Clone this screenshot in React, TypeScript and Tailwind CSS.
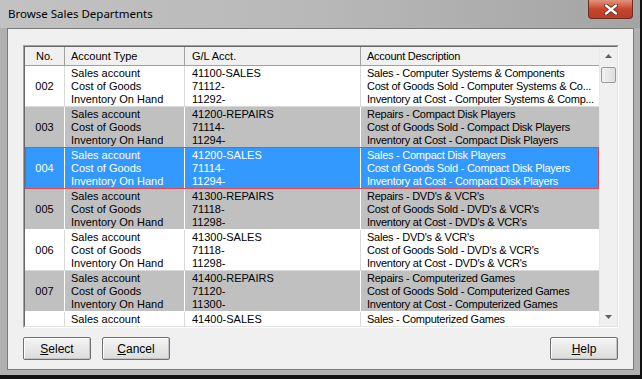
import React from "react";

type Row = {
  no: string;
  types: string[];
  accts: string[];
  descs: string[];
  shade: "white" | "gray" | "selected";
};

const rows: Row[] = [
  {
    no: "002",
    types: ["Sales account", "Cost of Goods", "Inventory On Hand"],
    accts: ["41100-SALES", "71112-", "11292-"],
    descs: [
      "Sales - Computer Systems & Components",
      "Cost of Goods Sold - Computer Systems & Co...",
      "Inventory at Cost - Computer Systems & Comp...",
    ],
    shade: "white",
  },
  {
    no: "003",
    types: ["Sales account", "Cost of Goods", "Inventory On Hand"],
    accts: ["41200-REPAIRS", "71114-", "11294-"],
    descs: [
      "Repairs - Compact Disk Players",
      "Cost of Goods Sold - Compact Disk Players",
      "Inventory at Cost - Compact Disk Players",
    ],
    shade: "gray",
  },
  {
    no: "004",
    types: ["Sales account", "Cost of Goods", "Inventory On Hand"],
    accts: ["41200-SALES", "71114-", "11294-"],
    descs: [
      "Sales - Compact Disk Players",
      "Cost of Goods Sold - Compact Disk Players",
      "Inventory at Cost - Compact Disk Players",
    ],
    shade: "selected",
  },
  {
    no: "005",
    types: ["Sales account", "Cost of Goods", "Inventory On Hand"],
    accts: ["41300-REPAIRS", "71118-", "11298-"],
    descs: [
      "Repairs - DVD's & VCR's",
      "Cost of Goods Sold - DVD's & VCR's",
      "Inventory at Cost - DVD's & VCR's",
    ],
    shade: "gray",
  },
  {
    no: "006",
    types: ["Sales account", "Cost of Goods", "Inventory On Hand"],
    accts: ["41300-SALES", "71118-", "11298-"],
    descs: [
      "Sales - DVD's & VCR's",
      "Cost of Goods Sold - DVD's & VCR's",
      "Inventory at Cost - DVD's & VCR's",
    ],
    shade: "white",
  },
  {
    no: "007",
    types: ["Sales account", "Cost of Goods", "Inventory On Hand"],
    accts: ["41400-REPAIRS", "71120-", "11300-"],
    descs: [
      "Repairs - Computerized Games",
      "Cost of Goods Sold - Computerized Games",
      "Inventory at Cost - Computerized Games",
    ],
    shade: "gray",
  },
  {
    no: "",
    types: ["Sales account", "Cost of Goods", "Inventory On Hand"],
    accts: ["41400-SALES", "71120-", "11300-"],
    descs: [
      "Sales - Computerized Games",
      "Cost of Goods Sold - Computerized Games",
      "Inventory at Cost - Computerized Games",
    ],
    shade: "white",
  },
];

const shadeClass = {
  white: "bg-white text-black border-[#d9d9d9]",
  gray: "bg-[#c0c0c0] text-black border-white",
  selected: "bg-[#3399ff] text-white border-white",
};

function Lines({ items }: { items: string[] }) {
  return (
    <div className="flex flex-col">
      {items.map((t, i) => (
        <span key={i} className="h-[13px] leading-[13px] whitespace-nowrap">
          {t}
        </span>
      ))}
    </div>
  );
}

function GridRow({ row }: { row: Row }) {
  const c = shadeClass[row.shade];
  return (
    <div className={`relative flex h-[41px] shrink-0 border-b ${c}`}>
      <div className={`w-[40px] shrink-0 border-r ${c} flex items-center justify-center`}>
        {row.no}
      </div>
      <div className={`w-[120px] shrink-0 border-r ${c} pl-[6px] pt-[1px]`}>
        <Lines items={row.types} />
      </div>
      <div className={`w-[176px] shrink-0 border-r ${c} pl-[7px] pt-[1px]`}>
        <Lines items={row.accts} />
      </div>
      <div className="w-[238px] shrink-0 pl-[6px] pt-[1px] overflow-hidden tracking-[-0.25px]">
        <Lines items={row.descs} />
      </div>
      {row.shade === "selected" && (
        <div className="absolute left-0 right-0 top-[-1px] bottom-[-1px] border border-[#e5454c] pointer-events-none" />
      )}
    </div>
  );
}

function WinButton({ label, left }: { label: string; left: string }) {
  return (
    <button className="h-[23px] w-[68px] border border-[#707070] rounded-[2px] bg-gradient-to-b from-[#f4f4f4] to-[#dcdcdc] shadow-[inset_1px_1px_0_#ffffff,inset_-1px_-1px_0_#c4c4c4] text-[12px] leading-[14px] text-black">
      <span className="underline">{left}</span>
      {label}
    </button>
  );
}

export default function App() {
  return (
    <div
      className="relative w-[642px] h-[379px] bg-[#b0b0b0] flex flex-col border-r-2 border-b-4 border-[#111111]"
      style={{ fontFamily: '"Liberation Sans", Arial, sans-serif' }}
    >
      {/* title bar */}
      <div className="h-[28px] shrink-0 bg-gradient-to-r from-[#c2c2c2] via-[#b8b8b8] to-[#a4a4a4] flex items-start pl-[8px] pt-[6px]">
        <span
          className="text-[11.5px] text-black leading-[16px]"
          style={{ fontFamily: '"Noto Sans", "Liberation Sans", sans-serif' }}
        >
          Browse Sales Departments
        </span>
      </div>
      <div className="absolute left-[588px] top-0 w-[45px] h-[19px] rounded-b-[4px] border border-t-0 border-[#6e2a1e] bg-gradient-to-b from-[#e1937e] via-[#c8452c] to-[#b93b27] flex items-center justify-center">
        <svg width="14" height="11" viewBox="0 0 14 11">
          <path d="M2 1.5 L12 9.5 M12 1.5 L2 9.5" stroke="#5a2218" strokeWidth="4" strokeLinecap="round" />
          <path d="M2 1.5 L12 9.5 M12 1.5 L2 9.5" stroke="#ffffff" strokeWidth="2.4" strokeLinecap="round" />
        </svg>
      </div>

      {/* client area */}
      <div className="flex-1 ml-[7px] mr-[6px] mb-[5px] border border-[#7a7a7a] bg-[#f0f0f0] flex flex-col px-[15px] pt-[16px] pb-[9px]">
        {/* grid */}
        <div className="h-[283px] w-[596px] border border-t-[#a0a0a0] border-l-[#a0a0a0] border-b-white border-r-white">
          <div className="h-full w-full border border-t-[#696969] border-l-[#696969] border-b-[#e3e3e3] border-r-[#e3e3e3] flex text-[11px]">
            <div className="w-[574px] flex flex-col overflow-hidden">
              <div className="h-[19px] shrink-0 flex border-b border-[#a0a0a0] bg-[#f0f0f0] text-black">
                <div className="w-[40px] shrink-0 border-r border-[#a0a0a0] flex items-center justify-center">No.</div>
                <div className="w-[120px] shrink-0 border-r border-[#a0a0a0] flex items-center pl-[6px]">Account Type</div>
                <div className="w-[176px] shrink-0 border-r border-[#a0a0a0] flex items-center pl-[7px]">G/L Acct.</div>
                <div className="w-[238px] shrink-0 flex items-center pl-[6px] tracking-[-0.25px]">Account Description</div>
              </div>
              {rows.map((r, i) => (
                <GridRow key={i} row={r} />
              ))}
            </div>
            {/* scrollbar */}
            <div className="w-[18px] flex flex-col items-center bg-[#f0f0f0] border-l border-[#e8e8e8]">
              <div className="h-[18px] flex items-center justify-center">
                <svg width="7" height="4" viewBox="0 0 7 4">
                  <path d="M0 4 L3.5 0 L7 4 Z" fill="#606060" />
                </svg>
              </div>
              <div className="mt-[2px] w-[15px] h-[16px] rounded-[2px] border border-[#9a9a9a] bg-gradient-to-r from-[#f2f2f2] to-[#dedede]" />
              <div className="flex-1" />
              <div className="h-[18px] flex items-center justify-center">
                <svg width="7" height="4" viewBox="0 0 7 4">
                  <path d="M0 0 L3.5 4 L7 0 Z" fill="#606060" />
                </svg>
              </div>
            </div>
          </div>
        </div>

        {/* buttons */}
        <div className="mt-[9px] flex items-center">
          <WinButton left="S" label="elect" />
          <div className="w-[11px]" />
          <WinButton left="C" label="ancel" />
          <div className="flex-1" />
          <WinButton left="H" label="elp" />
        </div>
      </div>
    </div>
  );
}
